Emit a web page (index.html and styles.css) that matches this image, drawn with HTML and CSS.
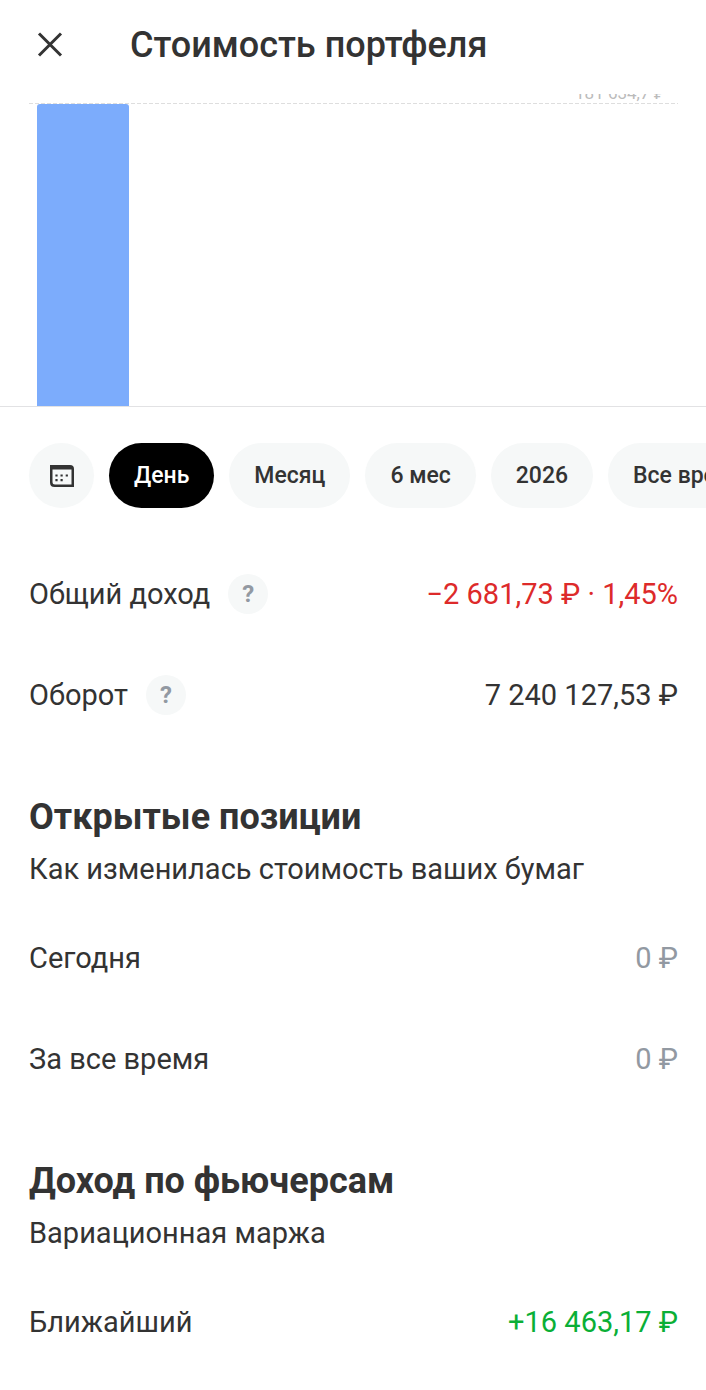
FILE: index.html
```html
<!DOCTYPE html>
<html lang="ru">
<head>
<meta charset="utf-8">
<meta name="viewport" content="width=device-width, initial-scale=1">
<title>Стоимость портфеля</title>
<link rel="stylesheet" href="styles.css">
</head>
<body>
<header class="header">
  <button class="close" type="button" aria-label="Закрыть">
    <svg viewBox="0 0 26 26" width="26" height="26" aria-hidden="true"><path d="M2 1.500l22 22M24 1.500L2 23.500" fill="none" stroke="currentColor" stroke-width="3"/></svg>
  </button>
  <h1 class="title">Стоимость портфеля</h1>
</header>
<main>
  <section class="chart" aria-label="График стоимости">
    <div class="scale"><span class="scale-label">181 634,7 ₽</span></div>
    <div class="plot"><div class="bar"></div></div>
  </section>
  <nav class="periods" aria-label="Период">
    <button class="chip chip-icon" type="button" aria-label="Выбрать даты">
      <svg viewBox="0 0 26 26" width="26" height="26" aria-hidden="true"><path fill="currentColor" fill-rule="evenodd" d="M1 2H21Q25 2 25 6V24H5.500Q1 24 1 19.500ZM3.500 6.500V19Q3.500 21.500 6 21.500H22.500V6.500Z"/><path d="M6.400 12.500h2.200M11.500 12.500h2.200M16.700 12.500h2.200M6.400 17.200h2.200M11.500 17.200h2.200" stroke="currentColor" stroke-width="2.200"/></svg>
    </button>
    <button class="chip chip-active" type="button">День</button>
    <button class="chip" type="button">Месяц</button>
    <button class="chip" type="button">6 мес</button>
    <button class="chip" type="button">2026</button>
    <button class="chip" type="button">Все время</button>
  </nav>
  <section class="group summary">
    <div class="row"><span class="name">Общий доход</span><button class="help" type="button" aria-label="Подробнее">?</button><span class="value loss">−2 681,73 ₽ · 1,45%</span></div>
    <div class="row"><span class="name">Оборот</span><button class="help" type="button" aria-label="Подробнее">?</button><span class="value">7 240 127,53 ₽</span></div>
  </section>
  <section class="group">
    <h2 class="heading">Открытые позиции</h2>
    <p class="caption">Как изменилась стоимость ваших бумаг</p>
    <div class="row"><span class="name">Сегодня</span><span class="value muted">0 ₽</span></div>
    <div class="row"><span class="name">За все время</span><span class="value muted">0 ₽</span></div>
  </section>
  <section class="group">
    <h2 class="heading">Доход по фьючерсам</h2>
    <p class="caption">Вариационная маржа</p>
    <div class="row"><span class="name">Ближайший</span><span class="value gain">+16 463,17 ₽</span></div>
  </section>
</main>
</body>
</html>
```
FILE: styles.css
```css
* { box-sizing: border-box; }
body { margin: 0; background: #fff; color: #333; font: 29px/40px Roboto, "Noto Sans", sans-serif; overflow-x: hidden; }
button { border: 0; padding: 0; font: inherit; color: inherit; cursor: pointer; }
h1, h2, p { margin: 0; }
.header { display: flex; align-items: center; height: 89px; padding: 0 37px; gap: 67px; }
.close { display: flex; background: none; }
.title { font-size: 36px; line-height: 48px; font-weight: 500; }
.chart { padding-top: 5px; border-bottom: 1px solid #e2e2e4; }
.scale { display: flex; justify-content: flex-end; align-items: flex-end; height: 10px; margin: 0 28px 0 29px; padding: 0 13px 3px 0; overflow: hidden; background: repeating-linear-gradient(90deg, #dedede 0 4px, transparent 4px 6px) bottom / 100% 1px no-repeat; }
.scale-label { font-size: 17px; line-height: 16px; color: #bbb; }
.plot { display: flex; padding-left: 37px; }
.bar { width: 92px; height: 302px; border-radius: 3px 3px 0 0; background: #7cacfc; }
.periods { display: flex; gap: 15px; padding: 36px 0 0 29px; overflow: hidden; }
.chip { flex: none; height: 65px; padding: 0 25px; border-radius: 33px; background: #f6f8f8; font-size: 23px; font-weight: 500; }
.chip-icon { display: flex; align-items: center; justify-content: center; width: 65px; padding: 0; }
.chip-active { background: #000; color: #fff; }
.group { padding: 0 28px 0 29px; margin-bottom: 48px; }
.summary { padding-top: 35px; }
.row { display: flex; align-items: center; height: 101px; }
.value { margin-left: auto; white-space: nowrap; }
.help { width: 40px; height: 40px; margin-left: 18px; border-radius: 50%; background: #f6f8f8; color: #9299a2; font-size: 24px; line-height: 40px; font-weight: 700; }
.heading { font-size: 36px; line-height: 48px; font-weight: 700; }
.caption { margin: 8px 0 18px; line-height: 40px; }
.loss { color: #dd2a2a; }
.gain { color: #0aaf36; }
.muted { color: #9299a2; }
```
